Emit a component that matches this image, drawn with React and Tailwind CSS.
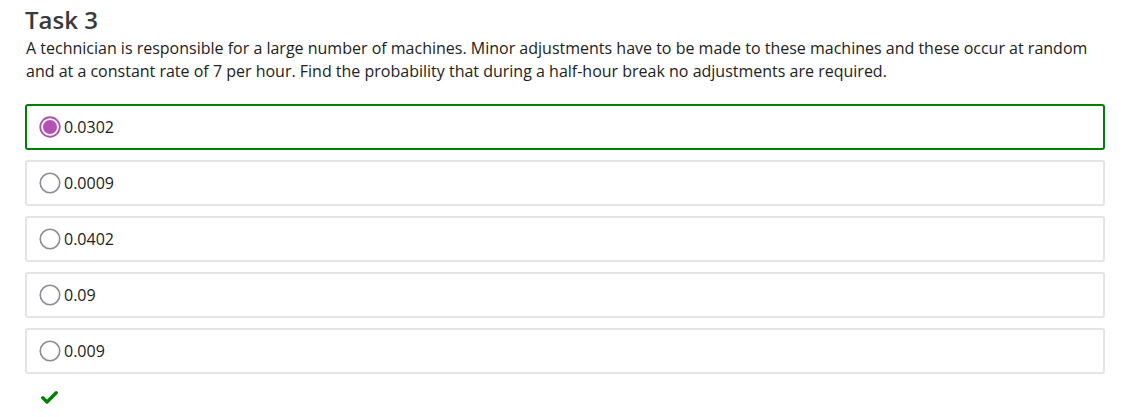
import React from "react";

const options = [
  { v: "0.0302", sel: true },
  { v: "0.0009" },
  { v: "0.0402" },
  { v: "0.09" },
  { v: "0.009" },
];

function Radio({ sel }) {
  return sel ? (
    <svg width="22" height="22" viewBox="0 0 22 22" className="shrink-0">
      <circle cx="11" cy="11" r="9.75" fill="white" stroke="#b44fb4" strokeWidth="1.8" />
      <circle cx="11" cy="11" r="7" fill="#b44fb4" />
    </svg>
  ) : (
    <svg width="22" height="22" viewBox="0 0 22 22" className="shrink-0">
      <circle cx="11" cy="11" r="9.75" fill="white" stroke="#8e8c96" strokeWidth="1.6" />
    </svg>
  );
}

export default function App() {
  return (
    <div className="w-[1133px] h-[417px] bg-white pl-[25px] pr-[28px] pt-[4px] text-[#333333]" style={{ fontFamily: '"Open Sans", sans-serif' }}>
      <h2 className="text-[24px] font-semibold leading-[32px] text-[#3a3a3a]">Task 3</h2>
      <p className="text-[16px] leading-[23px] mt-[1px] pl-[1px] text-[#222]">
        A technician is responsible for a large number of machines. Minor adjustments have to be made to these machines and these occur at random and at a constant rate of 7 per hour. Find the probability that during a half-hour break no adjustments are required.
      </p>
      <div className="mt-[21px] flex flex-col gap-[10px]">
        {options.map((o) => (
          <div
            key={o.v}
            className={
              "h-[46px] rounded-[3px] border-2 flex items-center pl-[12px] gap-[3px] " +
              (o.sel ? "border-[#008000]" : "border-[#e4e4e4]")
            }
          >
            <Radio sel={o.sel} />
            <span className="text-[16px] text-[#222]">{o.v}</span>
          </div>
        ))}
      </div>
      <div className="mt-[17px] pl-[16px]">
        <svg width="17" height="13" viewBox="0 0 17 13">
          <path d="M1.8 6.8 L6 11 L15.2 1.8" fill="none" stroke="#008000" strokeWidth="3.4" strokeLinecap="round" strokeLinejoin="round" />
        </svg>
      </div>
    </div>
  );
}
